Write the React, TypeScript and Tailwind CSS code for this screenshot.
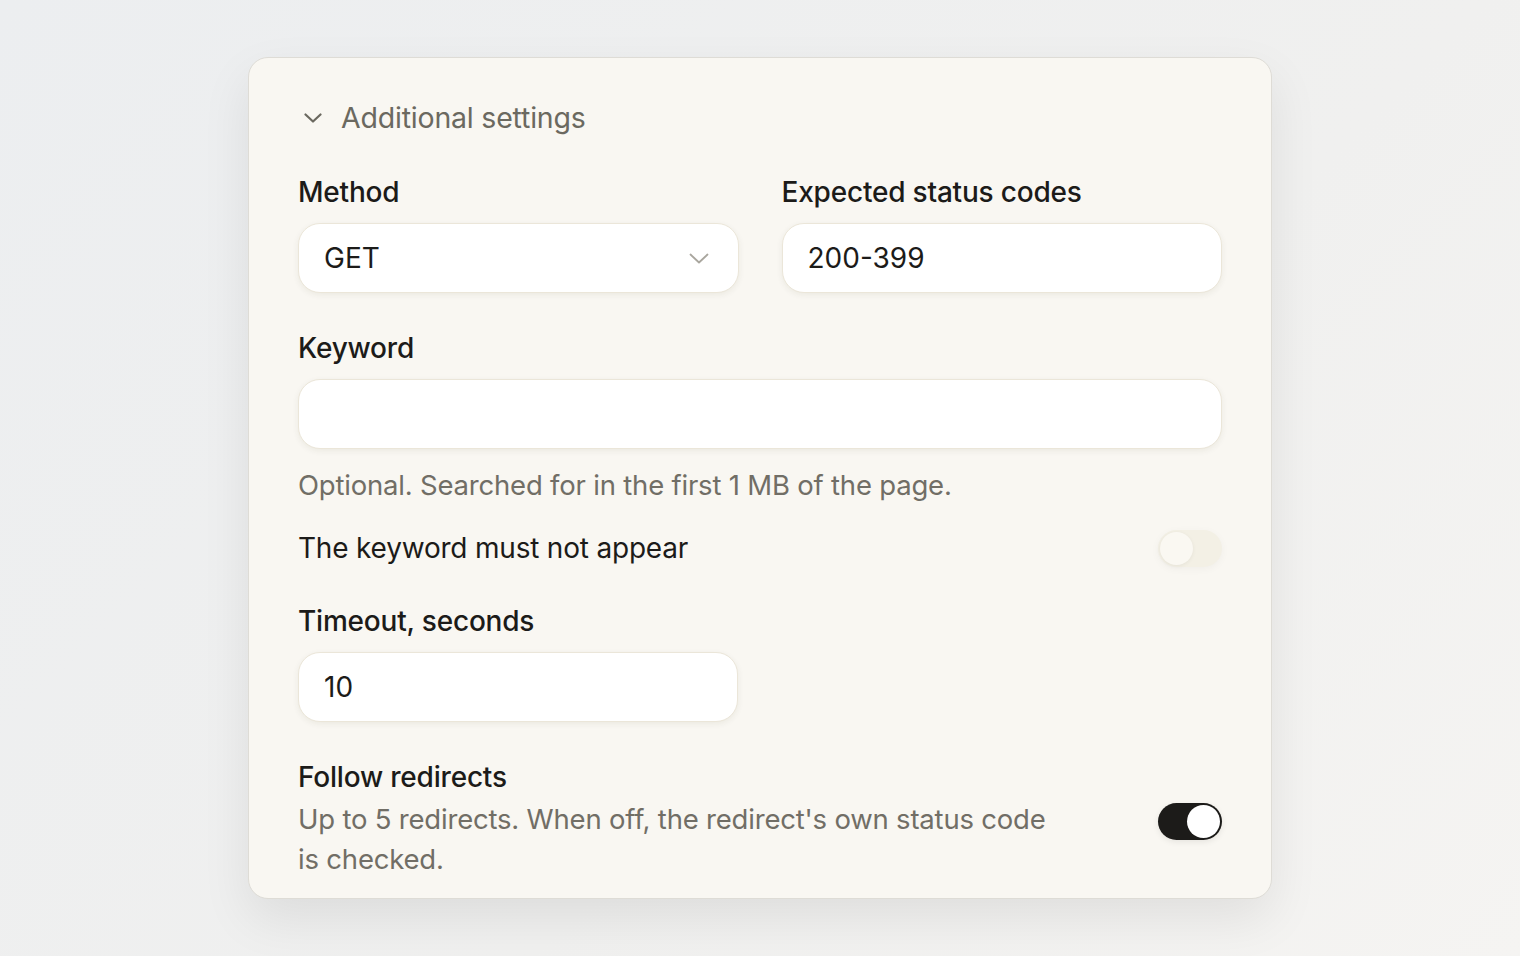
import React from "react";

function Toggle({ on }: { on: boolean }) {
  if (on) {
    return (
      <div className="w-[64px] h-[37px] rounded-full bg-[#1c1b19] flex items-center justify-end p-[2px] shadow-[0_2px_6px_rgba(0,0,0,0.08)]">
        <div className="w-[33px] h-[33px] rounded-full bg-white" />
      </div>
    );
  }
  return (
    <div className="w-[64px] h-[37px] rounded-full bg-[#f3f0e5] flex items-center justify-start p-[2px] shadow-[0_2px_8px_rgba(0,0,0,0.04)]">
      <div className="w-[33px] h-[33px] rounded-full bg-[#faf8f2] shadow-[0_1px_4px_rgba(0,0,0,0.06)]" />
    </div>
  );
}

const inputCls =
  "h-[70px] rounded-[22px] bg-white border border-[#ebe6d9] shadow-[0_2px_6px_rgba(60,50,20,0.07)] flex items-center px-[25px] text-[28px] text-[#1c1b19]";

const labelCls = "h-[36px] flex items-center text-[28px] font-medium text-[#1c1b19] tracking-[-0.2px]";

export default function App() {
  return (
    <div
      className="w-[1520px] h-[956px] flex items-center justify-center bg-[linear-gradient(135deg,#eceef0_0%,#f0f0ef_60%,#f5f4f2_100%)]"
      style={{ fontFamily: "Inter, 'Noto Sans', sans-serif" }}
    >
      <div className="w-[1024px] h-[842px] rounded-[20px] bg-[#f9f7f2] border border-[#dedcd6] shadow-[0_20px_50px_rgba(0,0,0,0.08)] px-[49px] pt-[40px] pb-[18px] flex flex-col overflow-hidden">
        <div className="h-[40px] flex items-center text-[#6b6960]">
          <svg className="ml-[6px] w-[18px] h-[10px]" viewBox="0 0 18 10" fill="none" stroke="currentColor" strokeWidth={2.2} strokeLinecap="round" strokeLinejoin="round">
            <path d="M1.5 1.5L9 8.5L16.5 1.5" />
          </svg>
          <span className="ml-[19px] text-[28.5px] tracking-[-0.2px]">Additional settings</span>
        </div>

        <div className="mt-[36px] grid grid-cols-2 gap-x-[43px]">
          <div className="flex flex-col">
            <div className={labelCls}>Method</div>
            <div className={inputCls + " mt-[13px] justify-between"}>
              <span>GET</span>
              <svg className="w-[20px] h-[11px] text-[#a9a69e] mr-[4px]" viewBox="0 0 20 11" fill="none" stroke="currentColor" strokeWidth={1.8} strokeLinecap="round" strokeLinejoin="round">
                <path d="M1.5 1.5L10 9.5L18.5 1.5" />
              </svg>
            </div>
          </div>
          <div className="flex flex-col">
            <div className={labelCls}>Expected status codes</div>
            <div className={inputCls + " mt-[13px]"}>
              <span>200-399</span>
            </div>
          </div>
        </div>

        <div className={labelCls + " mt-[37px]"}>Keyword</div>
        <div className={inputCls + " mt-[13px]"} />
        <div className="mt-[19px] h-[36px] flex items-center text-[27.5px] text-[#716e66] tracking-[-0.2px]">
          Optional. Searched for in the first 1 MB of the page.
        </div>
        <div className="mt-[24px] h-[40px] flex items-center justify-between">
          <span className="text-[28px] text-[#1c1b19] tracking-[-0.2px]">The keyword must not appear</span>
          <Toggle on={false} />
        </div>

        <div className={labelCls + " mt-[35px]"}>Timeout, seconds</div>
        <div className="mt-[13px] w-[440px]">
          <div className={inputCls}>
            <span>10</span>
          </div>
        </div>

        <div className="mt-[37px] flex items-center justify-between">
          <div className="flex flex-col">
            <div className={labelCls}>Follow redirects</div>
            <div className="mt-[4px] w-[770px] text-[27.5px] leading-[40px] text-[#716e66] tracking-[-0.2px]">
              Up to 5 redirects. When off, the redirect's own status code is checked.
            </div>
          </div>
          <div className="self-center mt-[4px]">
            <Toggle on={true} />
          </div>
        </div>
      </div>
    </div>
  );
}
